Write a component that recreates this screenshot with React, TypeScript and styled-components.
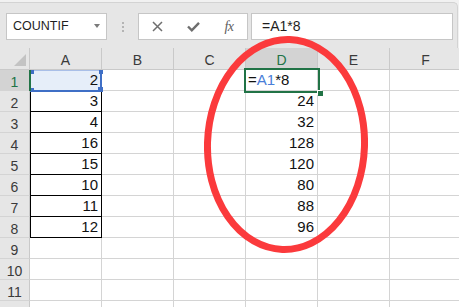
import React from 'react';
import styled, { createGlobalStyle } from 'styled-components';

const GlobalStyle = createGlobalStyle`
  html, body {
    margin: 0;
    padding: 0;
    background: #ffffff;
  }
  body {
    font-family: "Liberation Sans", Arial, sans-serif;
    overflow: hidden;
  }
`;

const green = '#217346';
const blue = '#3f6fc6';

const Page = styled.div`
  position: relative;
  width: 459px;
  height: 307px;
  overflow: hidden;
  background: #f1f1f1;
  padding-top: 2px;
  box-sizing: border-box;
`;

const Toolbar = styled.div`
  display: flex;
  align-items: flex-start;
  height: 46px;
  padding: 10px 4px 0 6px;
  box-sizing: border-box;
  background: #e6e6e6;
  border-top: 1px solid #d3d3d3;
  border-right: 1px solid #d3d3d3;
  border-top-right-radius: 5px;
  margin-right: 1px;
`;

const NameBox = styled.div`
  position: relative;
  width: 101px;
  height: 27px;
  box-sizing: border-box;
  background: #fff;
  border: 1px solid #c6c6c6;
  font-size: 12.5px;
  line-height: 25px;
  padding-left: 6px;
  color: #1e1e1e;
`;

const Caret = styled.span`
  position: absolute;
  right: 6px;
  top: 10px;
  width: 0;
  height: 0;
  border-left: 3.5px solid transparent;
  border-right: 3.5px solid transparent;
  border-top: 4px solid #7a7a7a;
`;

const Grip = styled.div`
  width: 31px;
  height: 27px;
  display: flex;
  flex-direction: column;
  align-items: center;
  justify-content: center;
  gap: 2px;
`;

const GripDot = styled.span`
  width: 2px;
  height: 2px;
  background: #b4b4b4;
`;

const FuncBox = styled.div`
  display: flex;
  width: 110px;
  height: 27px;
  box-sizing: border-box;
  background: #fff;
  border: 1px solid #c6c6c6;
`;

const FuncButton = styled.div`
  width: 36px;
  display: flex;
  align-items: center;
  justify-content: center;
  color: #6e6e6e;
`;

const FxLabel = styled.span`
  font-family: "Liberation Serif", "Times New Roman", serif;
  font-style: italic;
  font-size: 14px;
  color: #5e5e5e;
  letter-spacing: -0.5px;
`;

const FormulaInput = styled.div`
  flex: 1;
  margin-left: 3px;
  height: 27px;
  box-sizing: border-box;
  background: #fff;
  border: 1px solid #c6c6c6;
  font-size: 14px;
  line-height: 25px;
  padding-left: 10px;
  color: #1e1e1e;
`;

const Sheet = styled.div`
  display: grid;
  grid-template-columns: 30px repeat(6, 72px);
  grid-template-rows: 22px repeat(12, 21px);
  background: #fff;
`;

const Corner = styled.div`
  position: relative;
  background: #e6e6e6;
  border-right: 1px solid #c9c9c9;
  border-bottom: 1px solid #c9c9c9;
  box-sizing: border-box;

  &::after {
    content: '';
    position: absolute;
    right: 3px;
    bottom: 3px;
    width: 0;
    height: 0;
    border-left: 12px solid transparent;
    border-bottom: 12px solid #c3c3c3;
  }
`;

const ColHeader = styled.div<{ $active?: boolean }>`
  background: ${(p) => (p.$active ? '#d3d3d3' : '#e6e6e6')};
  color: ${(p) => (p.$active ? green : '#3a3a3a')};
  border-right: 1px solid #c9c9c9;
  border-bottom: 1px solid #c9c9c9;
  box-sizing: border-box;
  font-size: 14px;
  line-height: 21px;
  padding-top: 2px;
  text-align: center;
`;

const RowHeader = styled.div<{ $active?: boolean }>`
  position: relative;
  background: ${(p) => (p.$active ? '#d3d3d3' : '#e6e6e6')};
  color: ${(p) => (p.$active ? green : '#3a3a3a')};
  border-right: 1px solid #c9c9c9;
  border-bottom: 1px solid #d4d4d4;
  box-sizing: border-box;
  font-size: 14px;
  line-height: 20px;
  padding-top: 2px;
  text-align: center;

  ${(p) =>
    p.$active &&
    `
    &::after {
      content: '';
      position: absolute;
      top: 0;
      bottom: -1px;
      right: -2px;
      width: 2px;
      background: ${green};
      z-index: 3;
    }
  `}
`;

const Cell = styled.div<{ $boxed?: boolean; $fill?: string; $left?: boolean }>`
  position: relative;
  box-sizing: border-box;
  border-right: 1px solid ${(p) => (p.$boxed ? '#000' : '#d4d4d4')};
  border-bottom: 1px solid ${(p) => (p.$boxed ? '#000' : '#d4d4d4')};
  background: ${(p) => p.$fill || '#fff'};
  box-shadow: ${(p) => (p.$boxed ? 'inset 1px 0 0 #000' : 'none')};
  font-size: 15px;
  line-height: 20px;
  color: #111;
  text-align: ${(p) => (p.$left ? 'left' : 'right')};
  padding: ${(p) => (p.$left ? '0 0 0 2px' : '0 3px 0 0')};
`;

const RangeBox = styled.div`
  position: absolute;
  top: 0;
  left: 0;
  right: -1px;
  bottom: -2px;
  border-top: 1px solid #a9bfe8;
  border-left: 1px solid #a9bfe8;
  border-right: 2px solid ${blue};
  border-bottom: 2px solid ${blue};
  z-index: 2;
  pointer-events: none;
`;

const RangeDot = styled.span<{ $pos: 'tl' | 'tr' | 'bl' | 'br' }>`
  position: absolute;
  width: ${(p) => (p.$pos === 'br' ? 5 : 4)}px;
  height: ${(p) => (p.$pos === 'br' ? 5 : 4)}px;
  background: ${blue};
  ${(p) => (p.$pos[0] === 't' ? 'top: -1px;' : 'bottom: -2px;')}
  ${(p) => (p.$pos[1] === 'l' ? 'left: -1px;' : 'right: -3px;')}
`;

const ActiveBox = styled.div`
  position: absolute;
  top: -2px;
  left: -2px;
  right: -3px;
  bottom: -3px;
  border: 2px solid ${green};
  z-index: 2;
  pointer-events: none;
`;

const FillHandle = styled.span`
  position: absolute;
  right: -5px;
  bottom: -5px;
  width: 5px;
  height: 5px;
  background: ${green};
  box-shadow: -1px -1px 0 #fff;
`;

const RefText = styled.span`
  color: #4a7ed8;
`;

const Annotation = styled.svg`
  position: absolute;
  left: 204px;
  top: 36px;
  z-index: 5;
  pointer-events: none;
`;

const columns = ['A', 'B', 'C', 'D', 'E', 'F'];
const aValues = [2, 3, 4, 16, 15, 10, 11, 12];
const dValues = [null, 24, 32, 128, 120, 80, 88, 96];

const App: React.FC = () => {
  const rows = Array.from({ length: 12 }, (_, i) => i + 1);

  return (
    <>
      <GlobalStyle />
      <Page>
        <Toolbar>
          <NameBox>
            COUNTIF
            <Caret />
          </NameBox>
          <Grip>
            <GripDot />
            <GripDot />
            <GripDot />
          </Grip>
          <FuncBox>
            <FuncButton>
              <svg width="11" height="11" viewBox="0 0 11 11">
                <path d="M1 1 L10 10 M10 1 L1 10" stroke="#6e6e6e" strokeWidth="1.5" fill="none" />
              </svg>
            </FuncButton>
            <FuncButton>
              <svg width="13" height="11" viewBox="0 0 13 11">
                <path d="M1 5.5 L4.8 9.3 L12 1.8" stroke="#6e6e6e" strokeWidth="2.4" fill="none" />
              </svg>
            </FuncButton>
            <FuncButton>
              <FxLabel>fx</FxLabel>
            </FuncButton>
          </FuncBox>
          <FormulaInput>=A1*8</FormulaInput>
        </Toolbar>

        <Sheet>
          <Corner />
          {columns.map((c) => (
            <ColHeader key={c} $active={c === 'D'}>
              {c}
            </ColHeader>
          ))}
          {rows.map((r) => (
            <React.Fragment key={r}>
              {/* row 12 only peeks in at the bottom edge, its number is not visible */}
              <RowHeader $active={r === 1}>{r < 12 ? r : null}</RowHeader>
              {columns.map((c) => {
                if (c === 'A') {
                  const v = aValues[r - 1];
                  if (r === 1) {
                    return (
                      <Cell key={c} $fill="#e6eef9">
                        {v}
                        <RangeBox>
                          <RangeDot $pos="tl" />
                          <RangeDot $pos="tr" />
                          <RangeDot $pos="bl" />
                          <RangeDot $pos="br" />
                        </RangeBox>
                      </Cell>
                    );
                  }
                  return (
                    <Cell key={c} $boxed={v !== undefined}>
                      {v}
                    </Cell>
                  );
                }
                if (c === 'D') {
                  if (r === 1) {
                    return (
                      <Cell key={c} $left>
                        =<RefText>A1</RefText>*8
                        <ActiveBox>
                          <FillHandle />
                        </ActiveBox>
                      </Cell>
                    );
                  }
                  return <Cell key={c}>{dValues[r - 1]}</Cell>;
                }
                return <Cell key={c} />;
              })}
            </React.Fragment>
          ))}
        </Sheet>

        <Annotation width="164" height="218" viewBox="0 0 164 218">
          <ellipse
            cx="82"
            cy="108.5"
            rx="78.5"
            ry="105"
            fill="none"
            stroke="#fb3a3c"
            strokeWidth="7"
            transform="rotate(2 82 108.5)"
          />
        </Annotation>
      </Page>
    </>
  );
};

export default App;
